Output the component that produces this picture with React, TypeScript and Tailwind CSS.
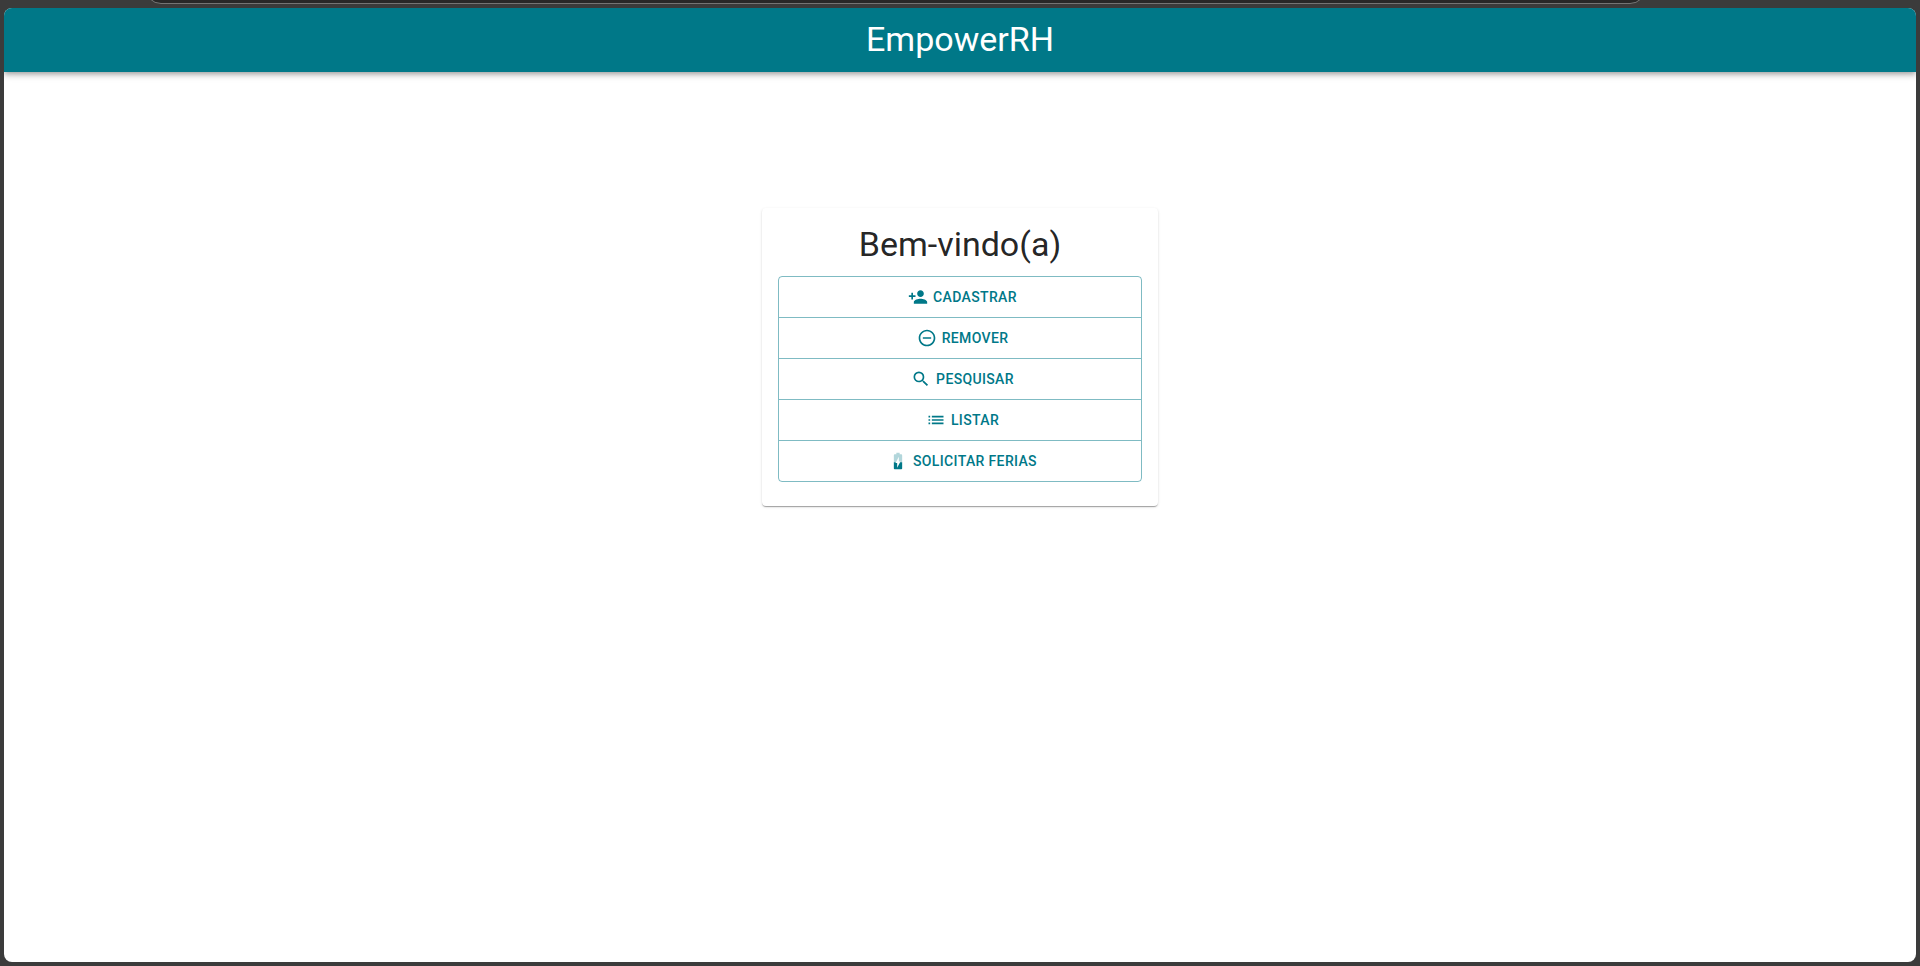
import type { IconType } from "react-icons";
import {
  MdBatteryCharging50,
  MdList,
  MdPersonAdd,
  MdRemoveCircleOutline,
  MdSearch,
} from "react-icons/md";

type Action = { label: string; icon: IconType };

const actions: Action[] = [
  { label: "Cadastrar", icon: MdPersonAdd },
  { label: "Remover", icon: MdRemoveCircleOutline },
  { label: "Pesquisar", icon: MdSearch },
  { label: "Listar", icon: MdList },
  { label: "Solicitar Ferias", icon: MdBatteryCharging50 },
];

function ActionButton({ label, icon: Icon }: Action) {
  return (
    <button
      type="button"
      className="flex w-full cursor-pointer items-center justify-center border-b border-[#007888]/50 py-[5px] text-sm font-medium tracking-wide text-[#007888] uppercase last:border-b-0 hover:bg-[#007888]/5"
    >
      <span className="p-[5px]">
        <Icon className="size-5" aria-hidden="true" />
      </span>
      {label}
    </button>
  );
}

export default function App() {
  return (
    <div className="flex min-h-screen flex-col bg-[#3b3b3b] px-1 pb-1 font-[Roboto,sans-serif]">
      <div className="flex h-1 items-end overflow-hidden pr-[270px] pl-[141px]">
        <div className="h-8 flex-1 shrink-0 rounded-full border border-[#757575] bg-[#282828]" />
      </div>
      <div className="mt-1 flex flex-1 flex-col overflow-hidden rounded-lg bg-white">
        <header className="bg-[#007888] pt-[11px] pb-[13px] text-center text-white shadow-[0_2px_4px_-1px_rgba(0,0,0,0.2),0_4px_5px_0_rgba(0,0,0,0.14),0_1px_10px_0_rgba(0,0,0,0.12)]">
          <h1 className="text-[34px] leading-10">EmpowerRH</h1>
        </header>
        <main className="flex flex-col items-center px-4 pt-34">
          <section className="w-full max-w-[396px] rounded bg-white px-4 pt-4 pb-6 shadow-[0_2px_1px_-1px_rgba(0,0,0,0.2),0_1px_1px_0_rgba(0,0,0,0.14),0_1px_3px_0_rgba(0,0,0,0.12)]">
            <h2 className="mb-3 text-center text-[34px] leading-10 text-black/87">
              Bem-vindo(a)
            </h2>
            <div className="overflow-hidden rounded border border-[#007888]/50">
              {actions.map((action) => (
                <ActionButton key={action.label} {...action} />
              ))}
            </div>
          </section>
        </main>
      </div>
    </div>
  );
}
